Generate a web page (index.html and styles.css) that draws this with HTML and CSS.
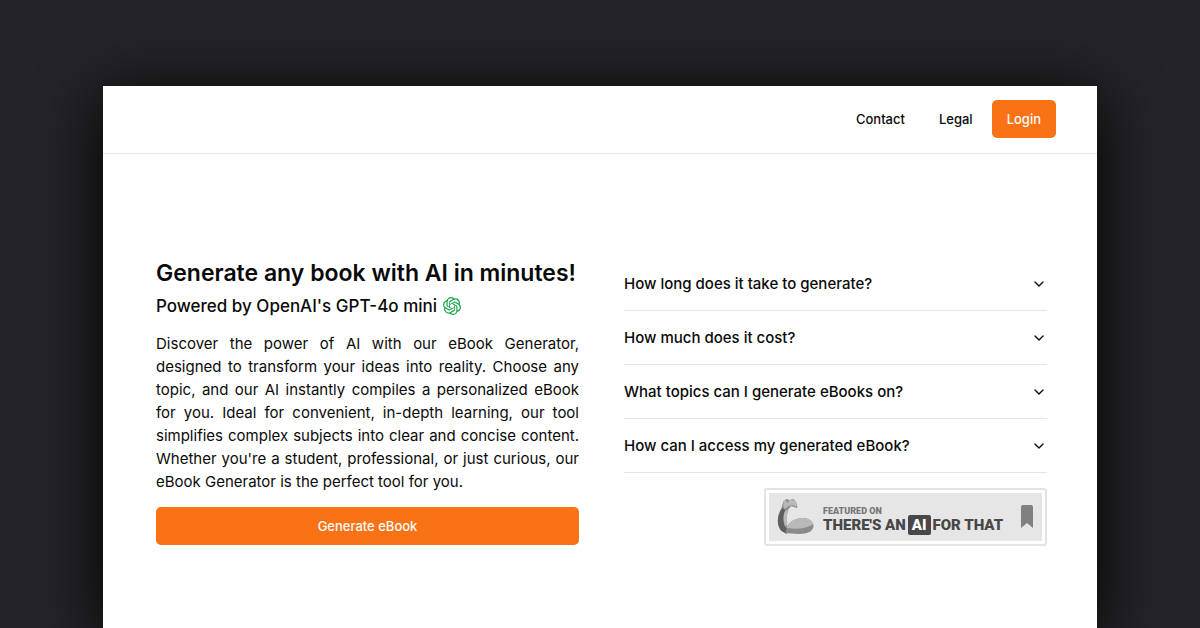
FILE: index.html
```html
<!DOCTYPE html>
<html lang="en">
<head>
    <meta charset="UTF-8">
    <meta name="viewport" content="width=device-width, initial-scale=1.0">
    <title>eBook Generator</title>
    <link rel="stylesheet" href="styles.css">
</head>
<body>

<div class="page">
    <header class="header">
        <nav class="nav">
            <a class="nav-link" href="#contact">Contact</a>
            <a class="nav-link" href="#legal">Legal</a>
            <button class="button" type="button">Login</button>
        </nav>
    </header>

    <main class="main">
        <section class="intro">
            <h1>Generate any book with AI in minutes!</h1>
            <h2>
                Powered by OpenAI's GPT-4o mini
                <svg class="openai" viewBox="0 0 24 24" aria-hidden="true">
                    <path d="M22.28 9.82a5.98 5.98 0 0 0-.52-4.91 6.05 6.05 0 0 0-6.51-2.9A6.07 6.07 0 0 0 4.98 4.18a5.98 5.98 0 0 0-4 2.9 6.05 6.05 0 0 0 .74 7.1 5.98 5.98 0 0 0 .51 4.91 6.05 6.05 0 0 0 6.51 2.9A5.98 5.98 0 0 0 13.26 24a6.06 6.06 0 0 0 5.77-4.21 5.99 5.99 0 0 0 4-2.9 6.06 6.06 0 0 0-.75-7.07zm-9.02 12.61a4.48 4.48 0 0 1-2.88-1.04l.14-.08 4.78-2.76a.79.79 0 0 0 .39-.68v-6.74l2.02 1.17a.07.07 0 0 1 .04.05v5.58a4.5 4.5 0 0 1-4.49 4.5zM3.6 18.3a4.47 4.47 0 0 1-.53-3.01l.14.09 4.78 2.76a.77.77 0 0 0 .78 0l5.84-3.37v2.33a.08.08 0 0 1-.03.06L9.74 19.95a4.5 4.5 0 0 1-6.14-1.65zM2.34 7.9a4.49 4.49 0 0 1 2.37-1.97V11.6a.77.77 0 0 0 .39.68l5.81 3.35-2.02 1.17a.08.08 0 0 1-.07 0l-4.83-2.79A4.5 4.5 0 0 1 2.34 7.87zm16.6 3.86L13.1 8.36l2.02-1.16a.08.08 0 0 1 .07 0l4.83 2.79a4.49 4.49 0 0 1-.68 8.1v-5.68a.79.79 0 0 0-.4-.65zm2.01-3.02l-.14-.09-4.77-2.78a.78.78 0 0 0-.79 0L9.41 9.23V6.9a.07.07 0 0 1 .03-.06l4.83-2.79a4.5 4.5 0 0 1 6.68 4.66zM8.31 12.86l-2.02-1.16a.08.08 0 0 1-.04-.06V6.07a4.5 4.5 0 0 1 7.38-3.45l-.14.08-4.78 2.76a.79.79 0 0 0-.39.68zm1.09-2.36L12 9l2.61 1.5v3L12 15l-2.6-1.5z"/>
                </svg>
            </h2>
            <p>Discover the power of AI with our eBook Generator, designed to transform your ideas into reality. Choose any topic, and our AI instantly compiles a personalized eBook for you. Ideal for convenient, in-depth learning, our tool simplifies complex subjects into clear and concise content. Whether you're a student, professional, or just curious, our eBook Generator is the perfect tool for you.</p>
            <button class="button" type="button">Generate eBook</button>
        </section>

        <section class="faq">
            <button class="question" type="button" aria-expanded="false">
                How long does it take to generate?
                <svg class="chevron" viewBox="0 0 24 24" aria-hidden="true"><path d="m6 9 6 6 6-6"/></svg>
            </button>
            <button class="question" type="button" aria-expanded="false">
                How much does it cost?
                <svg class="chevron" viewBox="0 0 24 24" aria-hidden="true"><path d="m6 9 6 6 6-6"/></svg>
            </button>
            <button class="question" type="button" aria-expanded="false">
                What topics can I generate eBooks on?
                <svg class="chevron" viewBox="0 0 24 24" aria-hidden="true"><path d="m6 9 6 6 6-6"/></svg>
            </button>
            <button class="question" type="button" aria-expanded="false">
                How can I access my generated eBook?
                <svg class="chevron" viewBox="0 0 24 24" aria-hidden="true"><path d="m6 9 6 6 6-6"/></svg>
            </button>

            <a class="badge" href="#featured">
                <svg class="arm" viewBox="0 0 36 36" aria-hidden="true">
                    <path fill="#8d8d8d" d="M6 2 9 0l3 1 4-1 3 4 1 4-1 1-3-1-2-1-3 3-2 4 0 8 1 6-2 5-4-1C-1 26-1 18 4 9z"/>
                    <path fill="#5f5f5f" d="M5 9C-1 16-1 27 4 32l5 3 2-4-4-4c-2-6-1-11 1-16z"/>
                    <path fill="#b9b9b9" d="m6 2 2-1 2 3 2-3 4 0 3 3 0 4-4-2-4 1-4 3-1-2zM8 11c-3 6-2 12 0 17l2-4-1-6 2-6z"/>
                    <path fill="#8a8a8a" d="M9 30c1-6 8-11 16-11 7 0 11 4 11 8 0 5-6 8-14 8-6 0-10-1-14-1z"/>
                    <path fill="#b9b9b9" d="M9 29c2-6 8-10 16-10 6 0 10 3 11 6-6 4-15 6-27 4z"/>
                </svg>
                <span class="badge-text">
                    <small>FEATURED ON</small>
                    <strong>THERE'S AN<span class="badge-ai">AI</span>FOR THAT</strong>
                </span>
                <svg class="bookmark" viewBox="0 0 12 24" aria-hidden="true"><path d="M0 2q0-2 2-2h8q2 0 2 2v21l-6-5-6 5z"/></svg>
            </a>
        </section>
    </main>
</div>

</body>
</html>
```

FILE: styles.css
```css
* {
    box-sizing: border-box;
}

body {
    font-family: Inter, sans-serif;
    background-color: #242328;
    color: #0a0a0a;
    margin: 0;
    padding: 86px 103px 0;
    height: 100vh;
    overflow: hidden;
    display: flex;
}

.page {
    flex: 1;
    background-color: #fff;
    box-shadow: 0 10px 60px #000;
}

.header {
    padding: 14px 41px 15px;
    border-bottom: 1px solid #e5e5e5;
}

.nav {
    display: flex;
    justify-content: flex-end;
    gap: 4px;
}

.nav-link,
.button {
    font-family: inherit;
    font-size: 13px;
    font-weight: 500;
    line-height: 18px;
    padding: 10px 15px;
    border: none;
    border-radius: 5px;
}

.nav-link {
    color: #0a0a0a;
    text-decoration: none;
}

.button {
    background-color: #f97316;
    color: #fafafa;
    cursor: pointer;
}

.main {
    display: grid;
    grid-template-columns: 1fr 1fr;
    gap: 45px;
    padding: 103px 50px 0 53px;
}

.intro {
    display: flex;
    flex-direction: column;
}

h1 {
    font-size: 23px;
    font-weight: 600;
    line-height: 33px;
    margin: 0;
    white-space: nowrap;
}

h2 {
    display: flex;
    align-items: center;
    gap: 6px;
    font-size: 17px;
    font-weight: 500;
    line-height: 32px;
    margin: 0 0 10px;
}

.openai {
    width: 18px;
    height: 18px;
    fill: #16a34a;
}

p {
    font-size: 15px;
    line-height: 23px;
    text-align: justify;
    margin: 0 0 14px;
}

.faq {
    display: flex;
    flex-direction: column;
}

.question {
    display: flex;
    align-items: center;
    justify-content: space-between;
    font-family: inherit;
    font-size: 15px;
    font-weight: 500;
    line-height: 23px;
    text-align: left;
    color: #0a0a0a;
    background: none;
    border: none;
    border-bottom: 1px solid #e5e5e5;
    padding: 15px 0;
    cursor: pointer;
}

.chevron {
    width: 16px;
    height: 16px;
    fill: none;
    stroke: currentColor;
    stroke-width: 2;
    stroke-linecap: round;
    stroke-linejoin: round;
}

.badge {
    align-self: flex-end;
    display: flex;
    align-items: center;
    width: 283px;
    height: 58px;
    margin-top: 15px;
    padding: 0 12px 0 11px;
    font-family: Roboto, sans-serif;
    color: #484848;
    text-decoration: none;
    background-color: #e6e6e6;
    border: 2px solid #e3e3e3;
    border-radius: 3px;
    box-shadow: inset 0 0 0 3px #fff;
}

.arm {
    width: 37px;
    height: 36px;
}

.badge-text {
    flex: 1;
    padding: 7px 0 0 9px;
}

.badge-text small {
    display: block;
    font-size: 9px;
    font-weight: 900;
    line-height: 8px;
    color: #777;
}

.badge-text strong {
    display: flex;
    align-items: center;
    font-size: 15px;
    font-weight: 900;
    line-height: 20px;
}

.badge-ai {
    color: #fff;
    background-color: #484848;
    border-radius: 2px;
    padding: 0 4px;
    margin: 0 2px;
}

.bookmark {
    width: 12px;
    height: 24px;
    fill: #808080;
}
```
